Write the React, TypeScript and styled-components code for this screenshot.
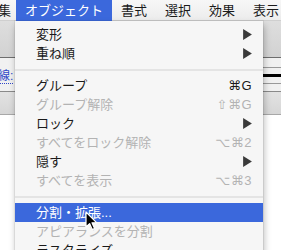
import React from "react";
import styled, { createGlobalStyle } from "styled-components";

const GlobalStyle = createGlobalStyle`
  html, body {
    margin: 0;
    padding: 0;
    background: #ffffff;
    overflow: hidden;
  }
  body {
    font-family: "Liberation Sans", "Noto Sans CJK JP", "DejaVu Sans", sans-serif;
  }
`;

type Item =
  | { kind: "sep" }
  | { kind: "item"; label: string; shortcut?: string; submenu?: boolean; disabled?: boolean; active?: boolean };

const items: Item[] = [
  { kind: "item", label: "変形", submenu: true },
  { kind: "item", label: "重ね順", submenu: true },
  { kind: "sep" },
  { kind: "item", label: "グループ", shortcut: "⌘G" },
  { kind: "item", label: "グループ解除", shortcut: "⇧⌘G", disabled: true },
  { kind: "item", label: "ロック", submenu: true },
  { kind: "item", label: "すべてをロック解除", shortcut: "⌥⌘2", disabled: true },
  { kind: "item", label: "隠す", submenu: true },
  { kind: "item", label: "すべてを表示", shortcut: "⌥⌘3", disabled: true },
  { kind: "sep" },
  { kind: "item", label: "分割・拡張...", active: true },
  { kind: "item", label: "アピアランスを分割", disabled: true },
  { kind: "item", label: "ラスタライズ" },
];

const titles = ["書式", "選択", "効果", "表示"];

export default function App() {
  return (
    <>
      <GlobalStyle />
      <Screen>
        <MenuBar>
          <Title $lead>編集</Title>
          <Title $open>オブジェクト</Title>
          {titles.map((t) => (
            <Title key={t}>{t}</Title>
          ))}
        </MenuBar>

        <Workspace>
          <ToolStrip />
          <StrokeRow>
            <StrokeLink>線:</StrokeLink>
            <StrokePreview>
              <PreviewLine $w={1} $c="#9a9a9a" />
              <PreviewLine $w={3} $c="#000000" />
              <PreviewLine $w={1} $c="#9a9a9a" />
            </StrokePreview>
          </StrokeRow>
          <GrayStrip />
        </Workspace>

        <Dropdown>
          {items.map((it, i) =>
            it.kind === "sep" ? (
              <Separator key={i} />
            ) : (
              <Row key={i} $disabled={it.disabled} $active={it.active}>
                <span>{it.label}</span>
                {it.shortcut && <Shortcut>{it.shortcut}</Shortcut>}
                {it.submenu && (
                  <Arrow viewBox="0 0 8 10" aria-hidden>
                    <path d="M0 0 L8 5 L0 10 Z" />
                  </Arrow>
                )}
              </Row>
            )
          )}
        </Dropdown>

        <Pointer viewBox="0 0 13 20" aria-hidden>
          <path
            d="M1 1 L1 16 L4.6 12.6 L7.2 18.6 L9.6 17.6 L7 11.8 L11.8 11.8 Z"
            fill="#000"
            stroke="#fff"
            strokeWidth="1.2"
            strokeLinejoin="round"
          />
        </Pointer>
      </Screen>
    </>
  );
}

const Screen = styled.div`
  position: relative;
  width: 281px;
  height: 250px;
  overflow: hidden;
  background: #ffffff;
`;

const MenuBar = styled.div`
  display: flex;
  height: 21px;
  margin-left: -24px;
  background: linear-gradient(#f7f7f7, #ececec);
  border-bottom: 1px solid #cfcfcf;
  box-sizing: border-box;
`;

const Title = styled.div<{ $open?: boolean; $lead?: boolean }>`
  display: flex;
  align-items: center;
  height: 21px;
  padding: ${(p) => (p.$lead ? "0 5px 0 9px" : "0 9px")};
  font-size: 13px;
  line-height: 21px;
  white-space: nowrap;
  color: ${(p) => (p.$open ? "#ffffff" : "#1a1a1a")};
  background: ${(p) => (p.$open ? "#3b68dc" : "transparent")};
`;

const Workspace = styled.div`
  display: flex;
  flex-direction: column;
`;

const ToolStrip = styled.div`
  height: 36px;
  background: linear-gradient(#dedede, #d2d2d2);
  border-bottom: 1px solid #6e6e6e;
`;

const StrokeRow = styled.div`
  display: flex;
  align-items: center;
  justify-content: space-between;
  height: 33px;
  background: #f1f1f1;
  border-bottom: 1px solid #8a8a8a;
`;

const StrokeLink = styled.span`
  margin-left: -2px;
  margin-top: 4px;
  font-size: 12px;
  line-height: 14px;
  color: #3048c8;
  border-bottom: 1px dotted #3048c8;
`;

const StrokePreview = styled.div`
  display: flex;
  flex-direction: column;
  justify-content: center;
  gap: 6px;
  width: 22px;
  height: 100%;
  padding-top: 2px;
  box-sizing: border-box;
`;

const PreviewLine = styled.div<{ $w: number; $c: string }>`
  height: ${(p) => p.$w}px;
  background: ${(p) => p.$c};
`;

const GrayStrip = styled.div`
  height: 22px;
  background: linear-gradient(#e2e2e2, #d6d6d6);
  border-bottom: 1px solid #a8a8a8;
`;

const Dropdown = styled.div`
  position: absolute;
  top: 21px;
  left: 15px;
  width: 248px;
  padding-top: 4px;
  background: #f6f6f6;
  box-shadow: 0 0 0 1px rgba(0, 0, 0, 0.06), 1px 4px 7px rgba(0, 0, 0, 0.28);
`;

const Row = styled.div<{ $disabled?: boolean; $active?: boolean }>`
  display: flex;
  align-items: center;
  justify-content: space-between;
  height: 19px;
  padding: 0 11px 0 21px;
  font-size: 13px;
  line-height: 19px;
  white-space: nowrap;
  color: ${(p) => (p.$active ? "#ffffff" : p.$disabled ? "#b3b3b3" : "#1a1a1a")};
  background: ${(p) => (p.$active ? "#3b68dc" : "transparent")};
`;

const Shortcut = styled.span`
  font-family: "Liberation Sans", "DejaVu Sans", sans-serif;
  font-size: 13px;
  letter-spacing: 0.5px;
`;

const Arrow = styled.svg`
  width: 9px;
  height: 11px;
  fill: #3a3a3a;
`;

const Separator = styled.div`
  height: 13px;
  display: flex;
  align-items: center;
  &::before {
    content: "";
    flex: 1;
    height: 2px;
    background: #e4e4e4;
  }
`;

const Pointer = styled.svg`
  position: absolute;
  left: 85px;
  top: 211px;
  width: 13px;
  height: 20px;
`;
